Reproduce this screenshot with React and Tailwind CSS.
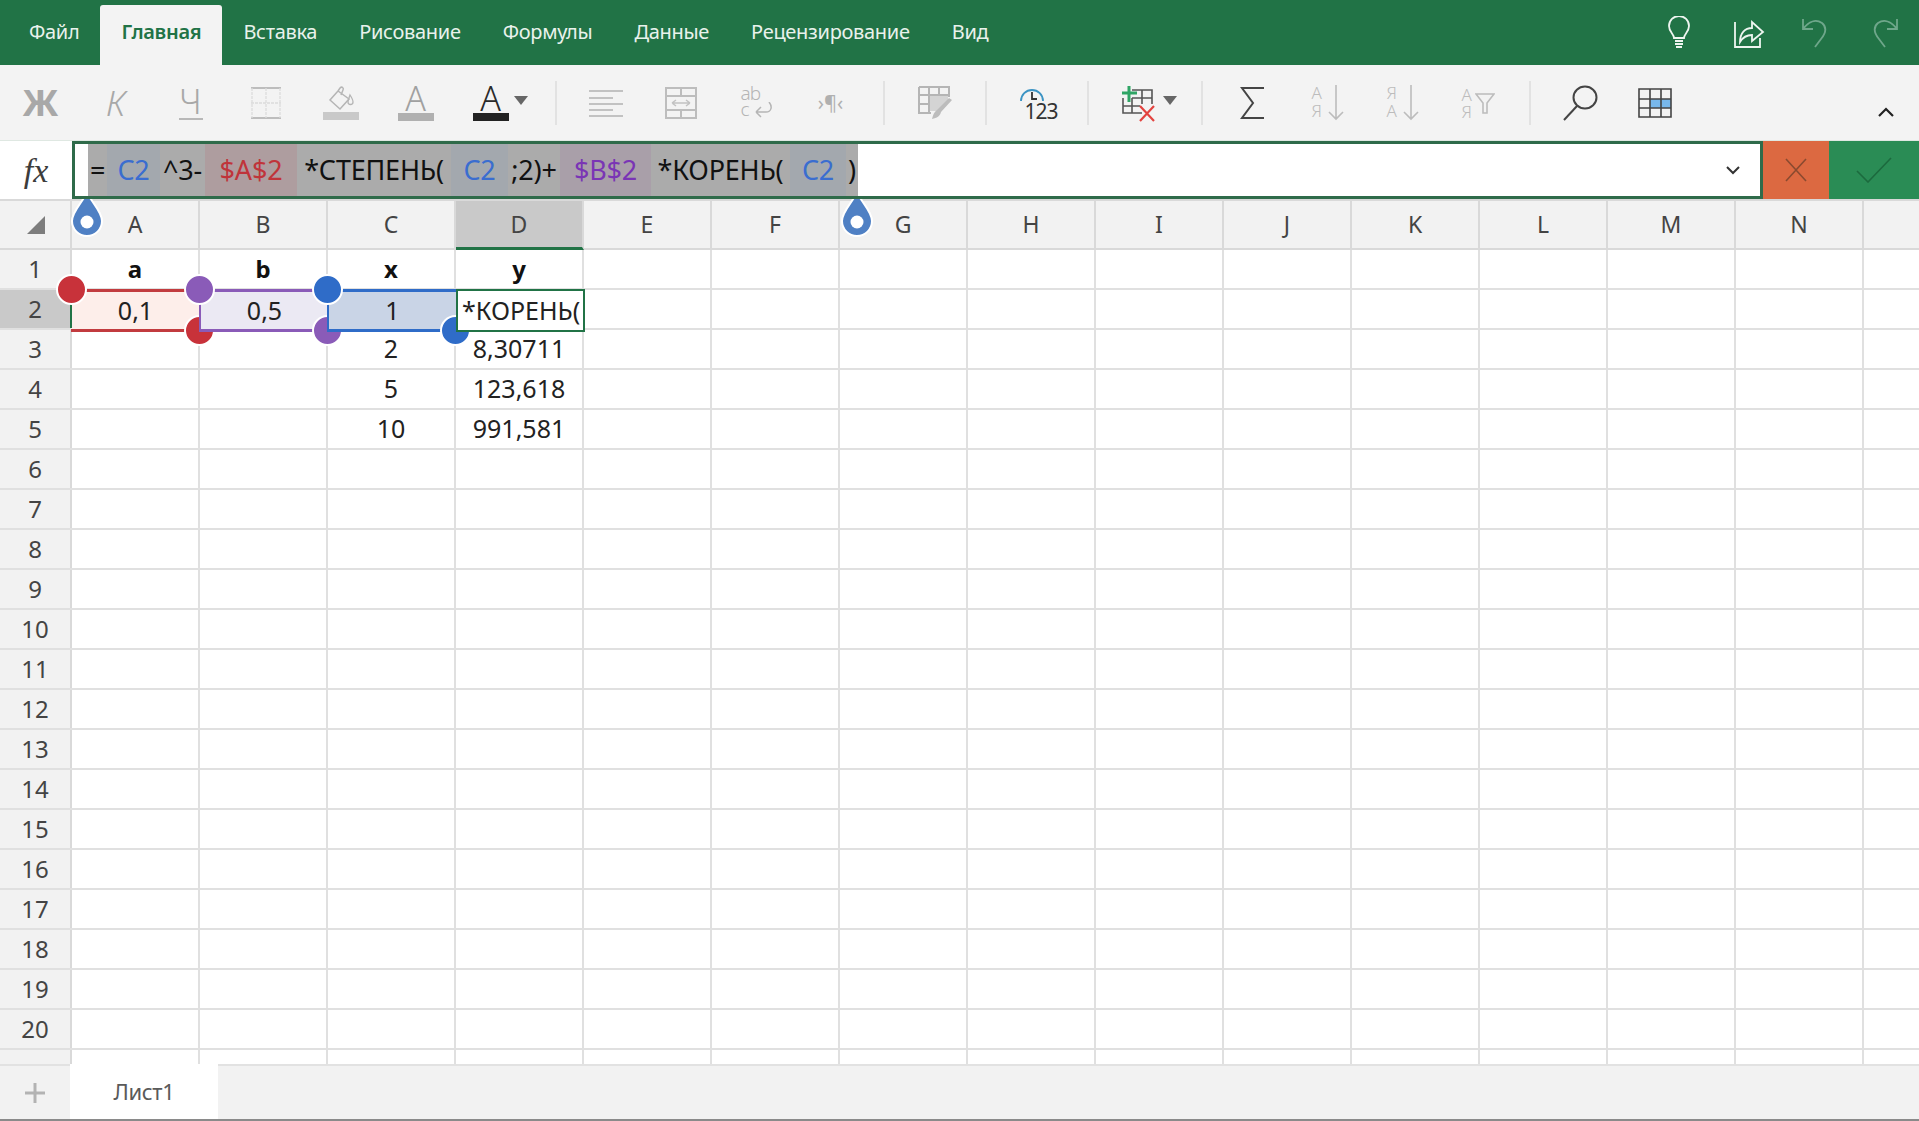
import React from "react";

const COLS = ["A","B","C","D","E","F","G","H","I","J","K","L","M","N"];
const TABS = ["Файл","Главная","Вставка","Рисование","Формулы","Данные","Рецензирование","Вид"];
const DATA = {
  1: {A:["a","b"],B:["b","b"],C:["x","b"],D:["y","b"]},
  2: {A:["0,1"],B:["0,5"],C:["1"]},
  3: {C:["2"],D:["8,30711"]},
  4: {C:["5"],D:["123,618"]},
  5: {C:["10"],D:["991,581"]},
};
const SEGS = [
  ["=", "w-[19px]", "bg-[#ababab]", "text-[#111]"],
  ["C2", "w-[53px]", "bg-[#a3a8ae]", "text-[#3a6dd0]"],
  ["^3-", "w-[45px]", "bg-[#ababab]", "text-[#111]"],
  ["$A$2", "w-[92px]", "bg-[#ae9d9f]", "text-[#c0343a]"],
  ["*СТЕПЕНЬ(", "w-[154px]", "bg-[#ababab]", "text-[#111]"],
  ["C2", "w-[57px]", "bg-[#a3a8ae]", "text-[#3a6dd0]"],
  [";2)+", "w-[52px]", "bg-[#ababab]", "text-[#111]"],
  ["$B$2", "w-[91px]", "bg-[#a99fa9]", "text-[#7a35b5]"],
  ["*КОРЕНЬ(", "w-[139px]", "bg-[#ababab]", "text-[#111]"],
  ["C2", "w-[56px]", "bg-[#a3a8ae]", "text-[#3a6dd0]"],
  [")", "w-[12px]", "bg-[#ababab]", "text-[#111]"],
];

const Sep = ({ ml }) => <div className={`w-[2px] h-[44px] bg-[#e2e2e2] ${ml}`} />;
const Btn = ({ children, className = "" }) => (
  <div className={`relative w-[75px] h-full flex items-center justify-center shrink-0 ${className}`}>{children}</div>
);
const Caret = ({ cls }) => (
  <svg width="14" height="9" viewBox="0 0 14 9" className={`absolute ${cls}`}><path d="M0 0H14L7 9Z" fill="#666" /></svg>
);
const Ico = ({ w = 40, h = 40, children, className = "" }) => (
  <svg width={w} height={h} viewBox={`0 0 ${w} ${h}`} fill="none" className={className}>{children}</svg>
);

function Drop({ cls }) {
  return (
    <svg width="36" height="50" viewBox="0 0 36 50" className={`absolute ${cls}`}>
      <path d="M18 2C22 12 33 21 33 31a15 15 0 0 1-30 0C3 21 14 12 18 2Z" fill="#4f80c4" stroke="#fff" strokeWidth="2" />
      <circle cx="18" cy="32" r="6.5" fill="#fff" />
    </svg>
  );
}
const Dot = ({ cls }) => <div className={`absolute w-[31px] h-[31px] rounded-full border-2 border-white ${cls}`} />;

export default function App() {
  return (
    <div className="relative w-[1919px] h-[1121px] overflow-hidden flex flex-col bg-white font-['Noto_Sans',sans-serif]">
      {/* tab bar */}
      <div className="h-[65px] bg-[#217346] flex items-end pl-[8px] shrink-0 relative">
        {TABS.map((t) => (
          <div key={t} className={t === "Главная"
            ? "h-[60px] px-[21px] pb-[6px] flex items-center bg-[#f3f3f3] rounded-t-[3px] text-[#217346] font-semibold text-[20px] tracking-[-0.3px]"
            : "h-[60px] px-[21px] pb-[6px] flex items-center text-[#e9f2ec] text-[20px] tracking-[-0.3px]"}>{t}</div>
        ))}
        <div className="ml-auto h-full flex items-center pb-[1px]">
          <Ico w={30} h={32} className="mr-[39px]">
            <path d="M10 22c0-4-5-6-5-12a10 10 0 0 1 20 0c0 6-5 8-5 12Z" stroke="#eef5f0" strokeWidth="1.8"/>
            <path d="M11 25h8M11 28h8M12 31h6" stroke="#eef5f0" strokeWidth="1.8"/>
          </Ico>
          <Ico w={32} h={32} className="mr-[36px]">
            <path d="M2 6v25h25v-9" stroke="#eef5f0" strokeWidth="1.8"/>
            <path d="M7 26c0-9 5-14 12-14V6l11 10-11 9v-6c-6 0-9 2-12 7Z" stroke="#eef5f0" strokeWidth="1.8"/>
          </Ico>
          <Ico w={28} h={32} className="mr-[42px]">
            <path d="M2 3v10h10M2 13C8 5 15 3 21 7c6 5 3 11-1 16l-6 8" stroke="#6fa78b" strokeWidth="1.8"/>
          </Ico>
          <Ico w={28} h={32} className="mr-[20px]">
            <path d="M26 3v10H16M26 13C20 5 13 3 7 7c-6 5-3 11 1 16l6 8" stroke="#6fa78b" strokeWidth="1.8"/>
          </Ico>
        </div>
      </div>

      {/* ribbon */}
      <div className="h-[75px] bg-[#f3f3f3] flex items-center pl-[3px] shrink-0">
        <Btn><span className="text-[36px] font-bold text-[#a8a8a8] leading-none">Ж</span></Btn>
        <Btn><span className="text-[35px] italic font-light text-[#a8a8a8] leading-none">К</span></Btn>
        <Btn>
          <div className="flex flex-col items-center">
            <span className="text-[34px] font-light text-[#a8a8a8] leading-[32px]">Ч</span>
            <div className="w-[24px] h-[2px] bg-[#b8b8b8] mt-[1px]" />
          </div>
        </Btn>
        <Btn>
          <Ico w={32} h={34}>
            <path d="M1 2H31M1 32H31" stroke="#bdbdbd" strokeWidth="2"/>
            <path d="M2 2V32M30 2V32M1 17H31M16 2V32" stroke="#dcdcdc" strokeWidth="1.3" strokeDasharray="3 1"/>
          </Ico>
        </Btn>
        <Btn>
          <div className="flex flex-col items-center">
            <Ico w={30} h={26}>
              <path d="M12 6 4 15l10 9 9-10Z M12 6l2-3c2-2 4 0 3 2l-2 5" stroke="#b5b5b5" strokeWidth="1.5"/>
              <path d="M24 10c2 3 3 5 3 7a2.5 2.5 0 0 1-5 0c0-2 1-4 2-7Z" stroke="#b5b5b5" strokeWidth="1.3"/>
            </Ico>
            <div className="w-[36px] h-[8px] bg-[#c9c9c9] mt-[1px]" />
          </div>
        </Btn>
        <Btn>
          <div className="flex flex-col items-center">
            <span className="text-[34px] font-light text-[#a0a0a0] leading-[26px]">A</span>
            <div className="w-[36px] h-[8px] bg-[#b0b0b0] mt-[2px]" />
          </div>
        </Btn>
        <Btn>
          <div className="flex flex-col items-center">
            <span className="text-[34px] font-light text-[#2a2a2a] leading-[26px]">A</span>
            <div className="w-[36px] h-[8px] bg-[#222] mt-[2px]" />
          </div>
          <Caret cls="left-[61px] top-[31px]" />
        </Btn>
        <Sep ml="ml-[27px]" />
        <Btn className="ml-[11px]">
          <Ico w={36} h={28}>
            <path d="M1 2H35M1 9H25M1 15H35M1 21H25M1 27H35" stroke="#c2c2c2" strokeWidth="2"/>
          </Ico>
        </Btn>
        <Btn>
          <Ico w={34} h={34}>
            <path d="M2 2H32V32H2ZM2 10H32M2 24H32M17 2V10M17 24V32" stroke="#bdbdbd" strokeWidth="2"/>
            <path d="M8 17H26M8 17l4-3M8 17l4 3M26 17l-4-3M26 17l-4 3" stroke="#c2c2c2" strokeWidth="1.5"/>
          </Ico>
        </Btn>
        <Btn>
          <div className="relative w-[30px] h-[34px]">
            <span className="absolute left-0 top-[-4px] text-[19px] leading-[22px] font-light text-[#b5b5b5] tracking-[-1px]">ab</span>
            <span className="absolute left-0 top-[12px] text-[19px] leading-[22px] font-light text-[#b5b5b5]">c</span>
            <svg width="20" height="16" viewBox="0 0 20 16" fill="none" className="absolute left-[12px] top-[16px]">
              <path d="M16 0c4 5 2 10-3 10H3M3 10l5-5M3 10l5 5" stroke="#b5b5b5" strokeWidth="1.5"/>
            </svg>
          </div>
        </Btn>
        <Btn>
          <span className="text-[20px] text-[#b0b0b0] leading-none whitespace-nowrap">›¶‹</span>
        </Btn>
        <Sep ml="ml-[15px]" />
        <Btn className="ml-[12px]">
          <Ico w={36} h={36}>
            <path d="M2 2H32V12M2 2V28H14M2 10H32M2 19H14M12 2V28M22 2V10" stroke="#b5b5b5" strokeWidth="2"/>
            <path d="M13 11H31V16L22 26H13Z" fill="#d4d4d4"/>
            <path d="M35 15 24 27c-1 4-4 6-9 7 1-4 2-7 5-9l12-12Z" fill="#bcbcbc"/>
          </Ico>
        </Btn>
        <Sep ml="ml-[13px]" />
        <Btn className="ml-[12px]">
          <div className="relative w-[36px] h-[36px]">
            <svg width="26" height="22" viewBox="0 0 26 22" fill="none" className="absolute left-0 top-0">
              <path d="M2 16A11 11 0 1 1 24 16" stroke="#3b93c3" strokeWidth="1.8"/>
              <path d="M13 7v7h5" stroke="#333" strokeWidth="1.8"/>
            </svg>
            <span className="absolute left-[6px] top-[15px] text-[21px] leading-[22px] text-[#333] tracking-[-1px]">123</span>
          </div>
        </Btn>
        <Sep ml="ml-[13px]" />
        <Btn className="ml-[12px]">
          <Ico w={38} h={38}>
            <path d="M3 14V29H22M3 22H20M12 14V29M12 6H32V20M12 14H32M22 6V20" stroke="#555" strokeWidth="1.6"/>
            <path d="M9 2V18M2 9H17" stroke="#2fa565" strokeWidth="3"/>
            <path d="M20 22 34 37M34 22 20 37" stroke="#e3433f" strokeWidth="2.2"/>
          </Ico>
          <Caret cls="left-[62px] top-[31px]" />
        </Btn>
        <Sep ml="ml-[25px]" />
        <Btn className="ml-[12px]">
          <Ico w={26} h={34}>
            <path d="M24 2H2L13 17 2 32H24" stroke="#444" strokeWidth="2"/>
          </Ico>
        </Btn>
        <Btn>
          <div className="relative w-[32px] h-[36px]">
            <span className="absolute left-0 top-[-1px] text-[17px] leading-[18px] font-light text-[#bcbcbc]">A</span>
            <span className="absolute left-0 top-[17px] text-[17px] leading-[18px] font-light text-[#bcbcbc]">Я</span>
            <svg width="16" height="36" viewBox="0 0 16 36" fill="none" className="absolute left-[16px] top-0"><path d="M8 0V34M1 27l7 7 7-7" stroke="#bcbcbc" strokeWidth="1.6"/></svg>
          </div>
        </Btn>
        <Btn>
          <div className="relative w-[32px] h-[36px]">
            <span className="absolute left-0 top-[-1px] text-[17px] leading-[18px] font-light text-[#bcbcbc]">Я</span>
            <span className="absolute left-0 top-[17px] text-[17px] leading-[18px] font-light text-[#bcbcbc]">A</span>
            <svg width="16" height="36" viewBox="0 0 16 36" fill="none" className="absolute left-[16px] top-0"><path d="M8 0V34M1 27l7 7 7-7" stroke="#bcbcbc" strokeWidth="1.6"/></svg>
          </div>
        </Btn>
        <Btn>
          <div className="relative w-[32px] h-[36px]">
            <span className="absolute left-0 top-[1px] text-[17px] leading-[18px] font-light text-[#bcbcbc]">A</span>
            <span className="absolute left-0 top-[18px] text-[17px] leading-[18px] font-light text-[#bcbcbc]">Я</span>
            <svg width="20" height="22" viewBox="0 0 20 22" fill="none" className="absolute left-[13px] top-[8px]"><path d="M1 1H19L12 10V20H8V10Z" stroke="#bcbcbc" strokeWidth="1.6"/></svg>
          </div>
        </Btn>
        <Sep ml="ml-[14px]" />
        <Btn className="ml-[11px]">
          <Ico w={36} h={36}>
            <ellipse cx="23" cy="12.5" rx="11.5" ry="11" stroke="#444" strokeWidth="2"/>
            <path d="M15 21 2 35" stroke="#444" strokeWidth="2"/>
          </Ico>
        </Btn>
        <Btn>
          <Ico w={34} h={30}>
            <path d="M12 11H33V20H12Z" fill="#78b8ec"/>
            <path d="M1 1H33V29H1ZM1 11H33M1 20H33M12 1V29M23 1V29" stroke="#444" strokeWidth="1.6"/>
          </Ico>
        </Btn>
        <div className="ml-auto mr-[25px] self-end mb-[22px]">
          <Ico w={16} h={12}><path d="M1 10 8 3l7 7" stroke="#222" strokeWidth="2.2"/></Ico>
        </div>
      </div>

      {/* formula bar */}
      <div className="h-[59px] flex shrink-0 bg-white border-t-[1px] border-[#dfe8e2]">
        <div className="w-[72px] flex items-center justify-center font-['Liberation_Serif',serif] italic text-[34px] text-[#3c3c3c]">fx</div>
        <div className="w-[1691px] border-[3px] border-[#2f6b4a] bg-white flex items-stretch pl-[13px] relative">
          {SEGS.map(([t, w, bg, fg], i) => (
            <div key={i} className={`${w} ${bg} ${fg} flex items-center justify-center text-[27px] whitespace-nowrap tracking-[-0.2px]`}>{t}</div>
          ))}
          <svg width="14" height="9" viewBox="0 0 14 9" fill="none" className="absolute right-[20px] top-[22px]"><path d="M1 1l6 6 6-6" stroke="#333" strokeWidth="2"/></svg>
        </div>
        <div className="w-[66px] bg-[#dc6941] flex items-center justify-center">
          <Ico w={22} h={24}><path d="M1 1 21 23M21 1 1 23" stroke="#8a4a30" strokeWidth="1.6"/></Ico>
        </div>
        <div className="flex-1 bg-[#2a8c55] flex items-center justify-center">
          <Ico w={36} h={26}><path d="M1 14 12 25 35 1" stroke="#1c6a3e" strokeWidth="1.6"/></Ico>
        </div>
      </div>

      {/* sheet */}
      <div className="relative flex-1 min-h-0 overflow-hidden">
        <div className="flex h-[51px] bg-[#f2f2f2] border-y-2 border-[#d9d9d9]">
          <div className="w-[72px] shrink-0 flex items-center justify-center border-r-2 border-[#d9d9d9]">
            <svg width="20" height="20" viewBox="0 0 20 20" className="ml-[2px]"><path d="M19 1V19H1Z" fill="#7d7d7d"/></svg>
          </div>
          {COLS.map((c) => (
            <div key={c} className={c === "D"
              ? "w-[128px] shrink-0 flex items-center justify-center text-[23px] text-[#444] bg-[#c9c9c9] border-b-[3px] border-[#217346] border-r-2 border-r-[#d9d9d9] mb-[-2px]"
              : "w-[128px] shrink-0 flex items-center justify-center text-[23px] text-[#444] border-r-2 border-[#d9d9d9]"}>{c}</div>
          ))}
          <div className="flex-1" />
        </div>
        {Array.from({ length: 21 }, (_, i) => i + 1).map((r) => (
          <div key={r} className="flex h-[40px] border-b-2 border-[#e0e0e0]">
            <div className={r === 2
              ? "w-[72px] shrink-0 flex items-center justify-center text-[24px] text-[#444] bg-[#c9c9c9] border-r-2 border-[#d9d9d9]"
              : "w-[72px] shrink-0 flex items-center justify-center text-[24px] text-[#444] bg-[#f2f2f2] border-r-2 border-[#d9d9d9]"}>{r <= 20 ? r : ""}</div>
            {COLS.map((c) => {
              const v = DATA[r] && DATA[r][c];
              return (
                <div key={c} className={v && v[1]
                  ? "w-[128px] shrink-0 flex items-center justify-center text-[24px] font-bold text-[#111] border-r-2 border-[#e0e0e0]"
                  : "w-[128px] shrink-0 flex items-center justify-center text-[25px] text-[#222] border-r-2 border-[#e0e0e0]"}>{v ? v[0] : ""}</div>
              );
            })}
            <div className="flex-1" />
          </div>
        ))}

        {/* reference overlays */}
        <div className="absolute left-[71px] top-[90px] w-[129px] h-[43px] bg-[#fdeeea] border-y-[3px] border-[#c23b3f] flex items-center justify-center text-[25px] text-[#222]">
          <div className="absolute left-[-1px] top-[1px] bottom-[1px] w-[2px] bg-[#217346]" />0,1
        </div>
        <Dot cls="left-[184px] top-[116px] bg-[#c8323a]" />
        <div className="absolute left-[199px] top-[90px] w-[129px] h-[43px] bg-[#ebe9f3] border-y-[3px] border-l-2 border-[#8a5bb8] flex items-center justify-center text-[25px] text-[#222]">0,5</div>
        <Dot cls="left-[312px] top-[116px] bg-[#8a5bb8]" />
        <div className="absolute left-[327px] top-[90px] w-[129px] h-[43px] bg-[#c9d4e6] border-y-[3px] border-l-2 border-[#2f6cc8] flex items-center justify-center text-[25px] text-[#222]">1</div>
        <Dot cls="left-[440px] top-[116px] bg-[#2f6cc8]" />
        <div className="absolute left-[456px] top-[90px] w-[129px] h-[43px] bg-white border-2 border-[#217346] pl-[4px] flex items-center overflow-hidden text-[25px] text-[#222] whitespace-nowrap">*КОРЕНЬ(</div>
        <Dot cls="left-[56px] top-[75px] bg-[#c8323a]" />
        <Dot cls="left-[184px] top-[75px] bg-[#8a5bb8]" />
        <Dot cls="left-[312px] top-[75px] bg-[#2f6cc8]" />
        <Drop cls="left-[69px] top-[-9px]" />
        <Drop cls="left-[839px] top-[-9px]" />
      </div>

      {/* sheet tabs */}
      <div className="absolute left-0 right-0 bottom-0 h-[57px] bg-[#f2f2f2] border-t-2 border-[#e2e2e2] border-b-2 border-b-[#8a8a8a] flex">
        <div className="w-[70px] flex items-center justify-center">
          <svg width="22" height="22" viewBox="0 0 22 22"><path d="M11 1V21M1 11H21" stroke="#b3b3b3" strokeWidth="3"/></svg>
        </div>
        <div className="w-[148px] bg-white mt-[-2px] flex items-center justify-center text-[22px] text-[#5a5a5a] tracking-[-0.3px]">Лист1</div>
      </div>
    </div>
  );
}
